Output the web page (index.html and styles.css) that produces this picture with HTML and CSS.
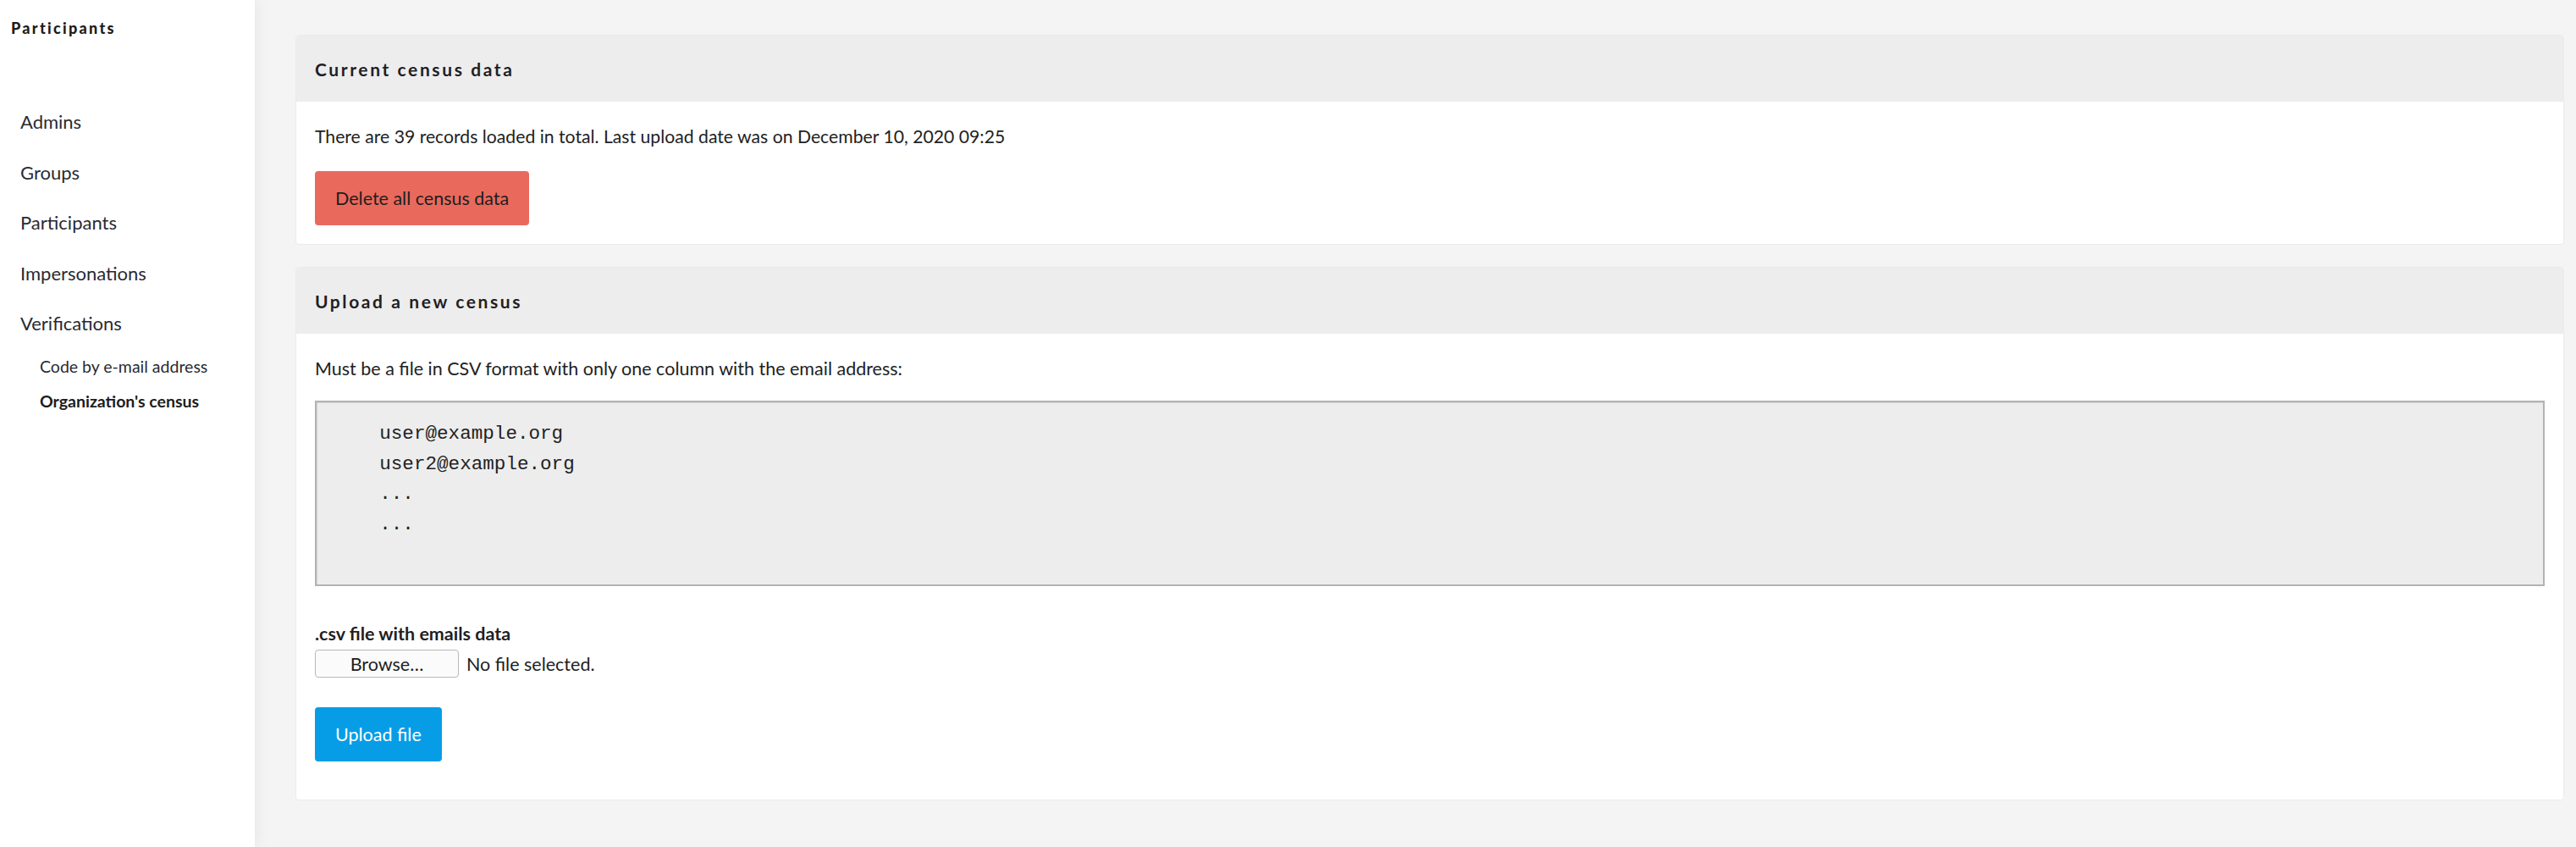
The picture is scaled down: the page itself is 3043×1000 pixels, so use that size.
FILE: index.html
```html
<!DOCTYPE html>
<html lang="en">
<head>
<meta charset="utf-8">
<title>Organization's census</title>
<link rel="stylesheet" href="styles.css">
</head>
<body>
<div class="layout">
  <aside class="sidebar">
    <h2 class="sidebar-title">Participants</h2>
    <nav>
      <ul class="nav">
        <li><a class="nav-link" href="#">Admins</a></li>
        <li><a class="nav-link" href="#">Groups</a></li>
        <li><a class="nav-link" href="#">Participants</a></li>
        <li><a class="nav-link" href="#">Impersonations</a></li>
        <li><a class="nav-link" href="#">Verifications</a>
          <ul class="subnav">
            <li><a class="subnav-link" href="#">Code by e-mail address</a></li>
            <li><a class="subnav-link is-active" href="#">Organization's census</a></li>
          </ul>
        </li>
      </ul>
    </nav>
  </aside>
  <main class="content">
    <section class="card">
      <div class="card-divider"><h2 class="card-title">Current census data</h2></div>
      <div class="card-section">
        <p class="text">There are 39 records loaded in total. Last upload date was on December 10, 2020 09:25</p>
        <button class="button button-alert" type="button">Delete all census data</button>
      </div>
    </section>
    <section class="card">
      <div class="card-divider"><h2 class="card-title">Upload a new census</h2></div>
      <div class="card-section card-section-form">
        <p class="text">Must be a file in CSV format with only one column with the email address:</p>
        <pre class="sample">    user@example.org
    user2@example.org
    ...
    ...</pre>
        <form class="upload-form">
          <label class="field-label">.csv file with emails data</label>
          <div class="file-row">
            <span class="file-button">Browse…</span>
            <span class="file-status">No file selected.</span>
          </div>
          <button class="button button-primary" type="button">Upload file</button>
        </form>
      </div>
    </section>
  </main>
</div>
</body>
</html>
```
FILE: styles.css
```css
* { box-sizing: border-box; }
html, body { margin: 0; padding: 0; height: 100%; }
body {
  font-family: "Lato", "Noto Sans", sans-serif;
  font-size: 21.5px;
  color: #222;
  background: #f4f4f4;
}
.layout {
  display: flex;
  min-height: 1000px;
}
.sidebar {
  width: 301px;
  flex: 0 0 301px;
  background: #fff;
  padding-top: 23px;
  box-shadow: 2px 0 18px rgba(0, 0, 0, 0.06);
  position: relative;
  z-index: 1;
}
.sidebar-title {
  margin: 0 0 0 13px;
  font-size: 18px;
  line-height: 20px;
  font-weight: 900;
  letter-spacing: 2.3px;
  color: #1c1c1c;
}
.nav {
  list-style: none;
  margin: 71px 0 0;
  padding: 0;
}
.nav-link {
  display: block;
  padding-left: 24px;
  line-height: 59.5px;
  font-size: 22px;
  color: #2a2a32;
  text-decoration: none;
}
.subnav {
  list-style: none;
  margin: 0;
  padding: 0;
}
.subnav-link {
  display: block;
  padding-left: 47px;
  line-height: 41px;
  font-size: 19.5px;
  color: #2a2a32;
  text-decoration: none;
}
.subnav-link.is-active { font-weight: 700; color: #1c1c1c; }

.content {
  flex: 1;
  padding: 41px 14px 0 48px;
}
.card {
  background: #fff;
  border: 1px solid #ebebeb;
  border-radius: 4px;
  margin-bottom: 26px;
  overflow: hidden;
}
.card-divider {
  background: #ededed;
  height: 78px;
  display: flex;
  align-items: center;
  padding: 0 22px;
}
.card-title {
  margin: 0;
  font-size: 21px;
  font-weight: 700;
  letter-spacing: 2.6px;
  color: #1f1f24;
}
.card-section {
  padding: 24px 22px 22px;
}
.card-section-form { padding-bottom: 45px; }
.text {
  margin: 0 0 24px;
  line-height: 34px;
  font-size: 21.2px;
}
.card-section-form .text { margin-bottom: 21px; font-size: 21.5px; }
.button {
  font-family: inherit;
  font-size: 21.5px;
  height: 64px;
  padding: 0 24px;
  border: 0;
  border-radius: 4px;
  cursor: pointer;
}
.button-alert { background: #e96a5d; color: #1e1e1e; }
.button-primary { background: #079de6; color: #fff; }
.sample {
  margin: 0;
  background: #ededed;
  border: 2px solid #b3b3b3;
  box-shadow: inset 1px 1px 0 #d6d6d6;
  padding: 20px 20px 53px;
  font-family: "Liberation Mono", monospace;
  font-size: 22.6px;
  line-height: 35.5px;
  color: #222;
}
.upload-form {
  margin-top: 39px;
}
.field-label {
  display: block;
  font-weight: 700;
  line-height: 34px;
  color: #1f1f24;
}
.file-row {
  display: flex;
  align-items: center;
  gap: 9px;
  margin-top: 2px;
}
.file-button {
  width: 170px;
  height: 33px;
  display: flex;
  align-items: center;
  justify-content: center;
  background: #fbfbfb;
  border: 1px solid #b8b8b8;
  border-radius: 4px;
  color: #1e1e1e;
}
.file-status { color: #1e1e1e; }
.button-primary { margin-top: 35px; }
```
